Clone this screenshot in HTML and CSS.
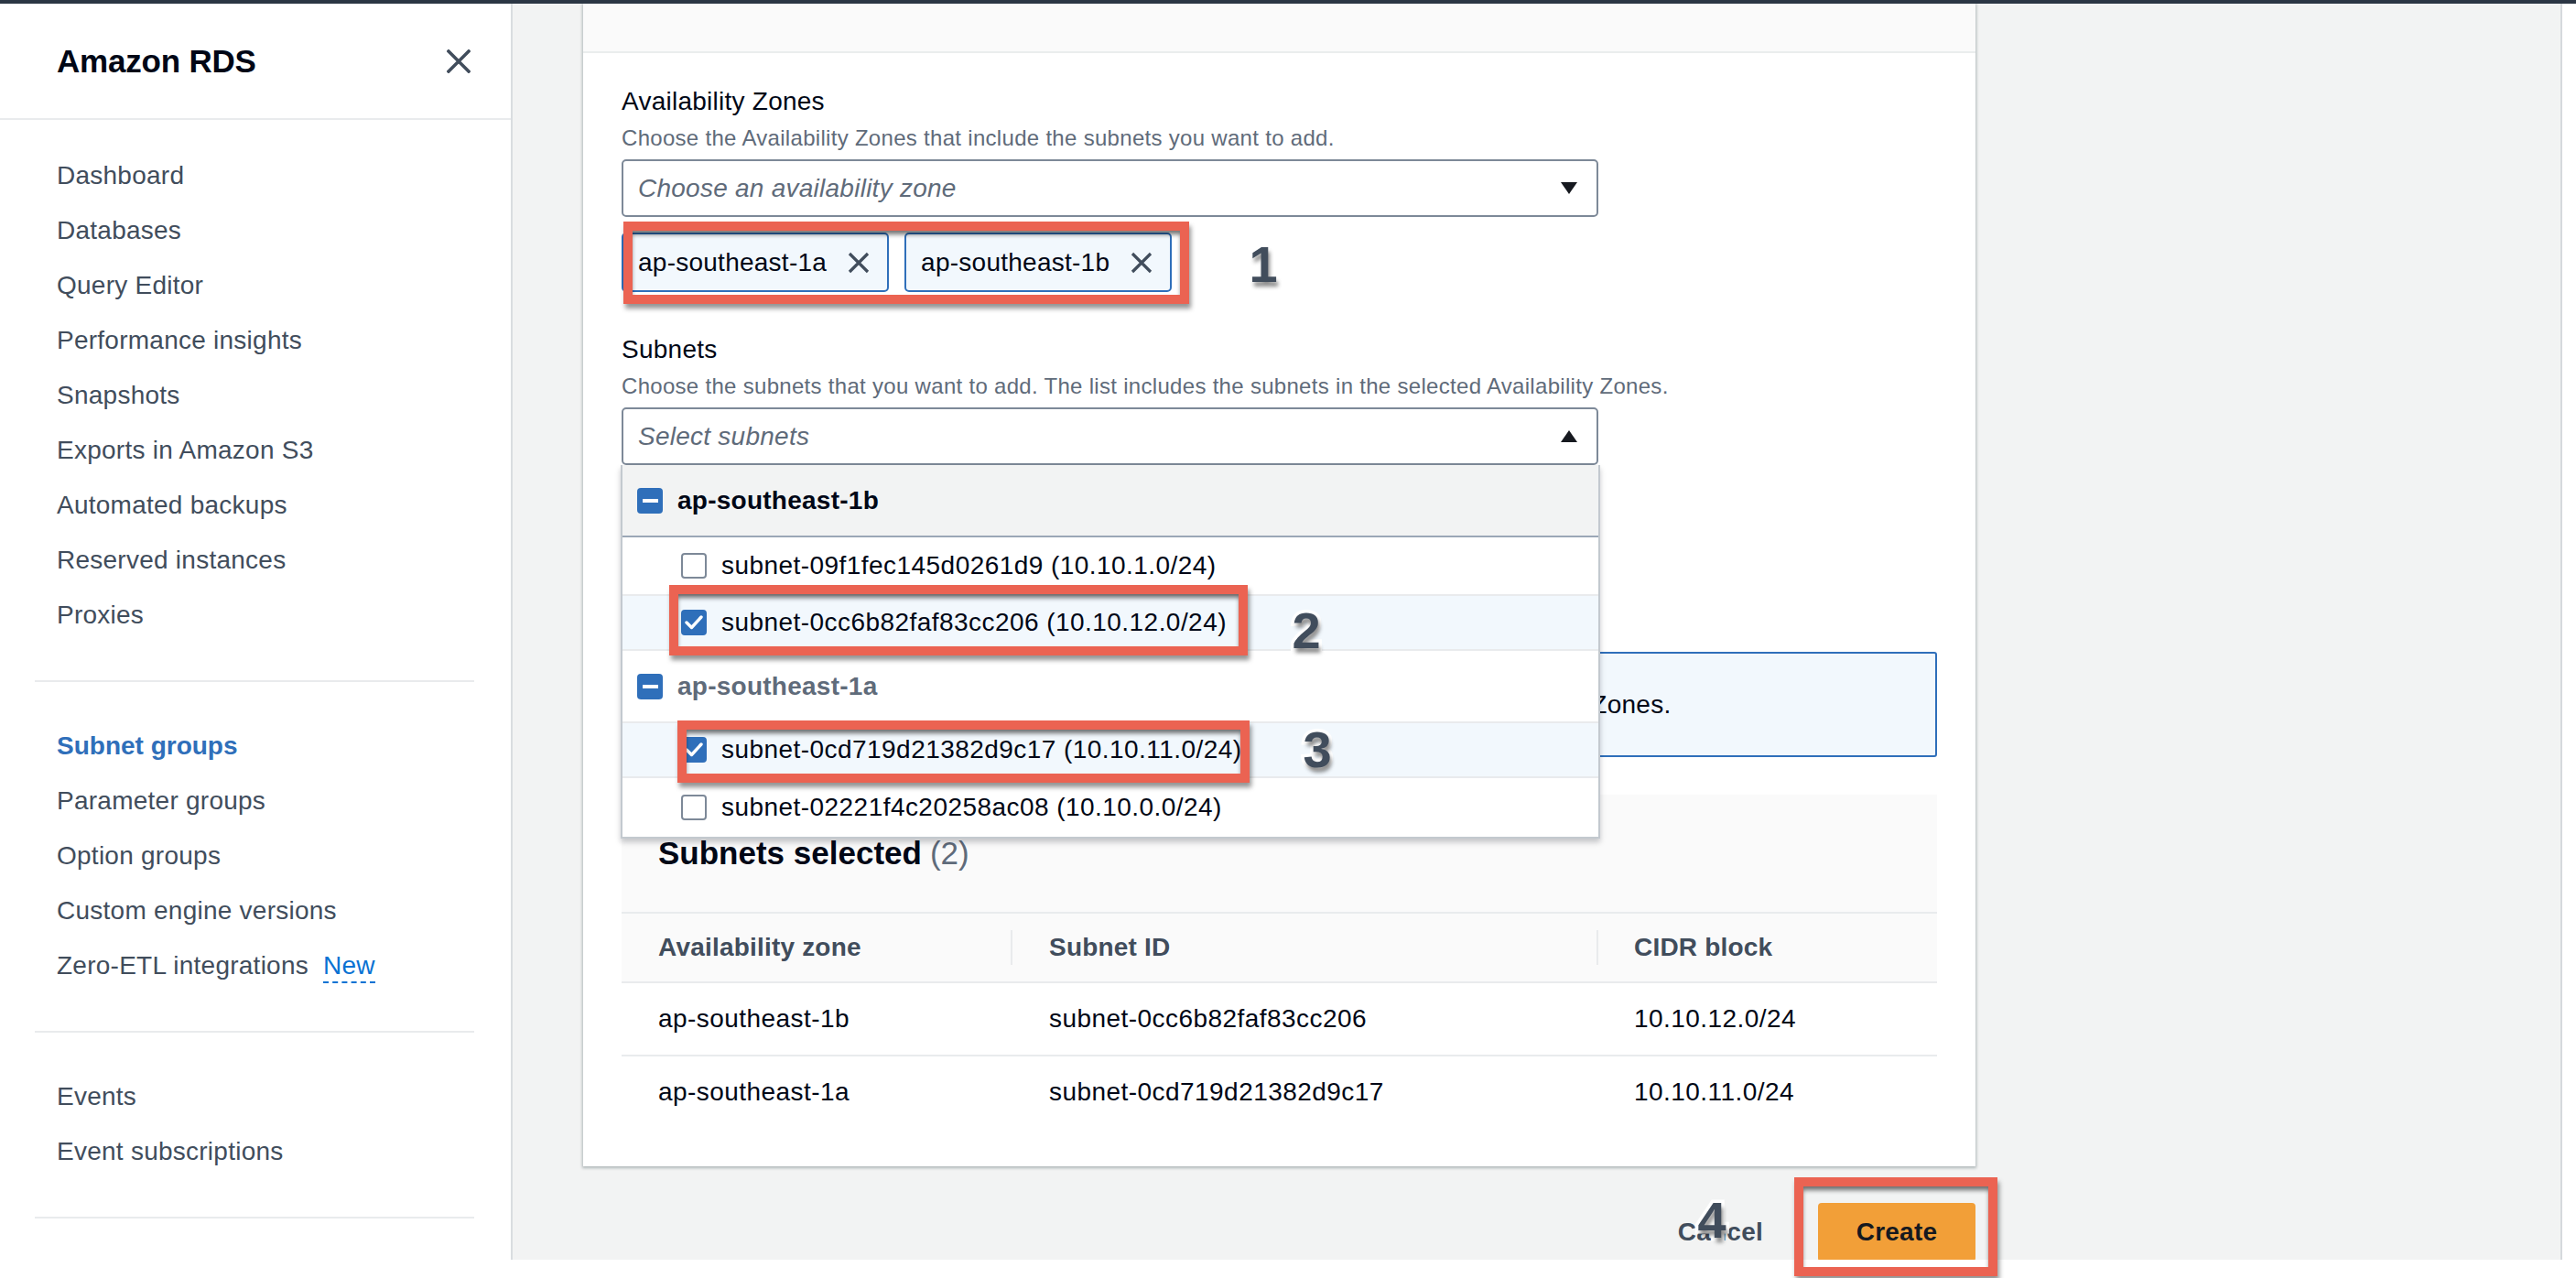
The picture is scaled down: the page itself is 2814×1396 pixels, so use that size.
FILE: index.html
```html
<!DOCTYPE html>
<html lang="en">
<head>
<meta charset="utf-8">
<title>Amazon RDS - Subnet groups</title>
<link rel="stylesheet" href="styles.css">
</head>
<body>
<div class="topbar"></div>
<div class="layout">
  <nav class="sidebar">
    <div class="side-head">
      <span class="side-title">Amazon RDS</span>
      <svg class="close" width="26" height="26" viewBox="0 0 26 26"><path d="M2 2 L24 24 M24 2 L2 24" stroke="#414d5c" stroke-width="3.6" stroke-linecap="square" fill="none"/></svg>
    </div>
    <ul class="nav nav-first">
      <li>Dashboard</li>
      <li>Databases</li>
      <li>Query Editor</li>
      <li>Performance insights</li>
      <li>Snapshots</li>
      <li>Exports in Amazon S3</li>
      <li>Automated backups</li>
      <li>Reserved instances</li>
      <li>Proxies</li>
    </ul>
    <div class="side-div"></div>
    <ul class="nav">
      <li class="active">Subnet groups</li>
      <li>Parameter groups</li>
      <li>Option groups</li>
      <li>Custom engine versions</li>
      <li>Zero-ETL integrations <span class="new">New</span></li>
    </ul>
    <div class="side-div"></div>
    <ul class="nav">
      <li>Events</li>
      <li>Event subscriptions</li>
    </ul>
    <div class="side-div"></div>
  </nav>

  <main class="main">
    <section class="panel">
      <div class="panel-head"></div>
      <div class="panel-body">
        <div class="field">
          <div class="label">Availability Zones</div>
          <div class="desc">Choose the Availability Zones that include the subnets you want to add.</div>
          <div class="select">
            <span class="placeholder">Choose an availability zone</span>
            <svg class="caret" width="20" height="15" viewBox="0 0 20 15"><path d="M1 1 H19 L10 14 Z" fill="#16191f"/></svg>
          </div>
          <div class="tokens">
            <div class="token">ap-southeast-1a<svg class="tx" width="26" height="26" viewBox="0 0 26 26"><path d="M3 3 L23 23 M23 3 L3 23" stroke="#414d5c" stroke-width="3.2" fill="none"/></svg></div>
            <div class="token">ap-southeast-1b<svg class="tx" width="26" height="26" viewBox="0 0 26 26"><path d="M3 3 L23 23 M23 3 L3 23" stroke="#414d5c" stroke-width="3.2" fill="none"/></svg></div>
          </div>
        </div>

        <div class="field field-subnets">
          <div class="label">Subnets</div>
          <div class="desc">Choose the subnets that you want to add. The list includes the subnets in the selected Availability Zones.</div>
          <div class="select-wrap">
            <div class="select">
              <span class="placeholder">Select subnets</span>
              <svg class="caret" width="20" height="15" viewBox="0 0 20 15"><path d="M1 14 H19 L10 1 Z" fill="#16191f"/></svg>
            </div>
            <div class="dropdown">
              <div class="group group-hl">
                <span class="minus"></span><span class="group-name">ap-southeast-1b</span>
              </div>
              <div class="opt"><span class="cb"></span>subnet-09f1fec145d0261d9 (10.10.1.0/24)</div>
              <div class="opt opt-sel"><span class="cb cb-on"><svg width="20" height="16" viewBox="0 0 20 16"><path d="M2 8 L7.5 13.5 L18 2" stroke="#fff" stroke-width="3.4" fill="none" stroke-linecap="round" stroke-linejoin="round"/></svg></span>subnet-0cc6b82faf83cc206 (10.10.12.0/24)</div>
              <div class="group">
                <span class="minus"></span><span class="group-name group-muted">ap-southeast-1a</span>
              </div>
              <div class="opt opt-sel"><span class="cb cb-on"><svg width="20" height="16" viewBox="0 0 20 16"><path d="M2 8 L7.5 13.5 L18 2" stroke="#fff" stroke-width="3.4" fill="none" stroke-linecap="round" stroke-linejoin="round"/></svg></span>subnet-0cd719d21382d9c17 (10.10.11.0/24)</div>
              <div class="opt opt-last"><span class="cb"></span>subnet-02221f4c20258ac08 (10.10.0.0/24)</div>
            </div>
          </div>
        </div>

        <div class="alert">
          <svg class="info" width="32" height="32" viewBox="0 0 32 32"><circle cx="16" cy="16" r="13.5" stroke="#0972d3" stroke-width="3" fill="none"/><path d="M16 14 V23 M16 9 V11" stroke="#0972d3" stroke-width="3" fill="none"/></svg>
          <span class="alert-text">For Multi-AZ DB clusters, you must select 3 subnets in 3 different Availability Zones.</span>
        </div>

        <div class="selected">
          <div class="sel-head"><span class="sel-title">Subnets selected</span> <span class="count">(2)</span></div>
          <div class="table">
            <div class="tr th">
              <div class="td">Availability zone</div>
              <div class="td sep">Subnet ID</div>
              <div class="td sep">CIDR block</div>
            </div>
            <div class="tr">
              <div class="td">ap-southeast-1b</div>
              <div class="td">subnet-0cc6b82faf83cc206</div>
              <div class="td">10.10.12.0/24</div>
            </div>
            <div class="tr tr-last">
              <div class="td">ap-southeast-1a</div>
              <div class="td">subnet-0cd719d21382d9c17</div>
              <div class="td">10.10.11.0/24</div>
            </div>
          </div>
        </div>
      </div>
    </section>

    <div class="actions">
      <span class="cancel">Cancel</span>
      <button class="create">Create</button>
    </div>
  </main>
  <div class="strip"></div>
</div>

<div class="mark mark-1"></div>
<div class="mark mark-2"></div>
<div class="mark mark-3"></div>
<div class="mark mark-4"></div>
<div class="num num-1">1</div>
<div class="num num-2">2</div>
<div class="num num-3">3</div>
<div class="num num-4">4</div>
</body>
</html>
```

FILE: styles.css
```css
* { box-sizing: border-box; }
html, body { margin: 0; padding: 0; }
body {
  position: relative;
  width: 2814px;
  height: 1396px;
  overflow: hidden;
  background: #ffffff;
  font-family: "Liberation Sans", Arial, sans-serif;
  font-size: 28px;
  letter-spacing: 0.25px;
  color: #000716;
}
.topbar { height: 4px; background: #2b3644; }
.layout { display: flex; height: 1372px; overflow: hidden; }

/* sidebar */
.sidebar {
  width: 560px;
  flex: none;
  background: #fff;
  border-right: 2px solid #d9dde0;
}
.side-head {
  height: 127px;
  border-bottom: 2px solid #e9ebed;
  display: flex;
  align-items: center;
  justify-content: space-between;
  padding: 0 44px 0 62px;
}
.side-title { font-weight: 700; font-size: 35px; color: #000716; letter-spacing: -0.2px; }
.close { display: block; }
.nav { list-style: none; margin: 0; padding: 40px 0 41px 62px; }
.nav-first { padding-top: 31px; }
.nav li { height: 60px; line-height: 60px; color: #414d5c; font-size: 28px; white-space: nowrap; }
.nav li.active { color: #2f6fba; font-weight: 700; letter-spacing: 0; }
.new {
  color: #0972d3;
  margin-left: 8px;
  border-bottom: 2px dashed #0972d3;
  padding-bottom: 2px;
}
.side-div { height: 2px; background: #e9ebed; margin: 0 40px 0 38px; }

/* main */
.main { flex: 1; background: #f2f3f3; overflow: hidden; }
.strip { width: 17px; flex: none; background: #fff; border-left: 2px solid #d5d9dc; }
.panel {
  width: 1521px;
  margin-left: 77px;
  background: #fff;
  box-shadow: 0 1px 3px 1px rgba(0, 28, 36, 0.28);
}
.panel-head { height: 54px; background: #fafafa; border-bottom: 2px solid #eaeded; }
.panel-body { padding: 33px 42px 42px 42px; }

.label { line-height: 40px; font-size: 28px; color: #000716; }
.desc { margin-top: 4px; line-height: 32px; font-size: 24px; color: #5f6b7a; letter-spacing: 0.3px; }
.select {
  margin-top: 7px;
  width: 1067px;
  height: 63px;
  border: 2px solid #7d8998;
  border-radius: 5px;
  background: #fff;
  display: flex;
  align-items: center;
  justify-content: space-between;
  padding: 0 20px 0 16px;
}
.placeholder { font-style: italic; color: #5f6b7a; font-size: 28px; }
.caret { display: block; }

.tokens { display: flex; gap: 17px; margin-top: 17px; }
.token {
  height: 65px;
  display: flex;
  align-items: center;
  padding: 0 18px 0 16px;
  background: #f2f8fd;
  border: 2px solid #2f6fba;
  border-radius: 5px;
  font-size: 28px;
  color: #000716;
}
.tx { margin-left: 22px; display: block; }

.field-subnets { margin-top: 43px; }
.select-wrap { position: relative; width: 1067px; }
.dropdown {
  position: absolute;
  top: 100%;
  left: -1px;
  width: 1070px;
  z-index: 5;
  background: #fff;
  border: 2px solid #c3c9cf;
  border-top: none;
  box-shadow: 0 4px 6px rgba(0, 7, 22, 0.22);
}
.group {
  height: 77px;
  display: flex;
  align-items: center;
  padding-left: 16px;
  gap: 16px;
  font-weight: 700;
}
.group-hl { background: #f2f3f3; border-bottom: 2px solid #9ba7b6; height: 79px; }
.group-name { color: #000716; }
.group-muted { color: #5f6b7a; }
.minus {
  width: 28px;
  height: 28px;
  border-radius: 4px;
  background: #2f6fba;
  display: flex;
  align-items: center;
  justify-content: center;
}
.minus::after { content: ""; width: 17px; height: 4px; background: #fff; }
.opt {
  height: 62px;
  display: flex;
  align-items: center;
  padding-left: 64px;
  gap: 16px;
  color: #000716;
  letter-spacing: 0.45px;
}
.opt-sel { background: #f2f8fd; border-top: 2px solid #e9ebed; border-bottom: 2px solid #e9ebed; }
.opt-last { height: 64px; }
.cb {
  width: 28px;
  height: 28px;
  border: 2px solid #7d8998;
  border-radius: 4px;
  background: #fff;
  display: flex;
  align-items: center;
  justify-content: center;
}
.cb-on { background: #2f6fba; border-color: #2f6fba; }
.cb svg { display: block; }

.alert {
  margin-top: 204px;
  height: 115px;
  border: 2px solid #2f6fba;
  border-radius: 3px;
  background: #f2f8fd;
  display: flex;
  align-items: center;
  padding: 0 40px;
  gap: 14px;
}
.info { display: block; flex: none; }
.alert-text { white-space: nowrap; font-size: 28px; color: #000716; }

.selected { margin-top: 41px; background: #fafafa; }
.sel-head { height: 128px; display: flex; align-items: center; padding-left: 40px; font-size: 35px; letter-spacing: 0; }
.sel-title { font-weight: 700; color: #000716; }
.count { color: #5f6b7a; margin-left: 9px; }
.table { border-top: 2px solid #e9ebed; }
.tr {
  display: grid;
  grid-template-columns: 425px 640px 1fr;
  height: 80px;
  border-bottom: 2px solid #e9ebed;
  background: #fff;
  align-items: center;
  letter-spacing: 0.45px;
}
.tr-last { border-bottom: none; height: 78px; }
.th { height: 76px; background: #fafafa; font-weight: 700; color: #414d5c; letter-spacing: 0.2px; }
.td { padding-left: 40px; position: relative; white-space: nowrap; }
.td:nth-child(2) { padding-left: 42px; }
.td:nth-child(3) { padding-left: 41px; }
.sep::before {
  content: "";
  position: absolute;
  left: 0;
  top: 50%;
  transform: translateY(-50%);
  width: 2px;
  height: 38px;
  background: #e9ebed;
}

.actions {
  width: 1521px;
  margin-left: 77px;
  margin-top: 40px;
  display: flex;
  justify-content: flex-end;
  align-items: center;
  gap: 60px;
}
.cancel { font-weight: 700; color: #414d5c; font-size: 28px; }
.create {
  width: 172px;
  height: 64px;
  border: none;
  border-radius: 4px;
  background: #f29f38;
  color: #16191f;
  font-family: "Liberation Sans", Arial, sans-serif;
  font-weight: 700;
  font-size: 28px;
  letter-spacing: 0.25px;
  padding: 0;
}

/* annotations */
.mark {
  position: absolute;
  border: 10px solid #eb6352;
  box-shadow: 2px 5px 5px rgba(0, 0, 0, 0.42), inset 0 5px 5px -1px rgba(0, 0, 0, 0.55);
  z-index: 20;
  pointer-events: none;
}
.mark-1 { left: 681px; top: 242px; width: 618px; height: 90px; }
.mark-2 { left: 731px; top: 639px; width: 632px; height: 77px; }
.mark-3 { left: 740px; top: 787px; width: 625px; height: 68px; }
.mark-4 { left: 1960px; top: 1286px; width: 222px; height: 108px; }

.num {
  position: absolute;
  width: 60px;
  text-align: center;
  font-family: "Liberation Sans", Arial, sans-serif;
  font-weight: 700;
  font-size: 56px;
  line-height: 1;
  letter-spacing: 0;
  color: #414d5c;
  -webkit-text-stroke: 7px #ffffff;
  paint-order: stroke fill;
  text-shadow: 2px 5px 4px rgba(0, 0, 0, 0.45);
  z-index: 21;
}
.num-1 { left: 1350px; top: 261px; }
.num-2 { left: 1397px; top: 661px; }
.num-3 { left: 1409px; top: 791px; }
.num-4 { left: 1840px; top: 1305px; }
```
